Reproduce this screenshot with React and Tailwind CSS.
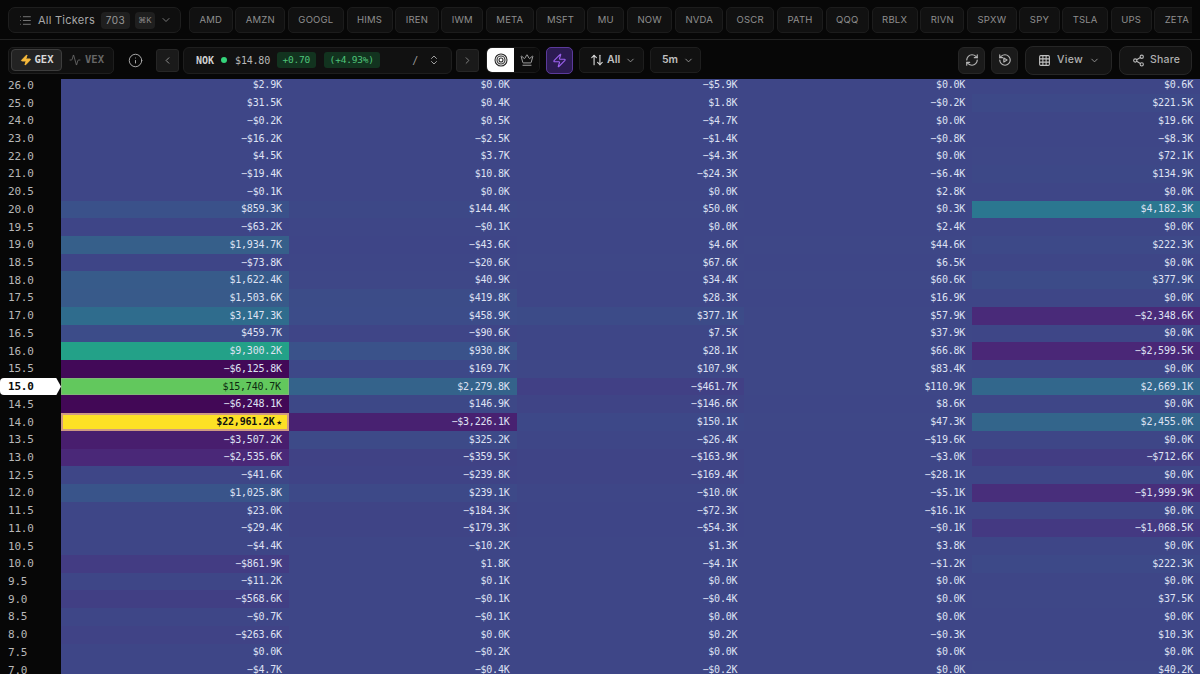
import React from "react";
import { List, ChevronDown, ChevronLeft, ChevronRight, ChevronsUpDown, Info, Activity, Crown, Zap, ArrowUpDown, RefreshCw, Grid3x3, Share2 } from "lucide-react";

const tickers = ["AMD","AMZN","GOOGL","HIMS","IREN","IWM","META","MSFT","MU","NOW","NVDA","OSCR","PATH","QQQ","RBLX","RIVN","SPXW","SPY","TSLA","UPS","ZETA"];

const rows = [
["26.0","$2.9K","$0.0K","−$5.9K","$0.0K","$0.6K"],
["25.0","$31.5K","$0.4K","$1.8K","−$0.2K","$221.5K"],
["24.0","−$0.2K","$0.5K","−$4.7K","$0.0K","$19.6K"],
["23.0","−$16.2K","−$2.5K","−$1.4K","−$0.8K","−$8.3K"],
["22.0","$4.5K","$3.7K","−$4.3K","$0.0K","$72.1K"],
["21.0","−$19.4K","$10.8K","−$24.3K","−$6.4K","$134.9K"],
["20.5","−$0.1K","$0.0K","$0.0K","$2.8K","$0.0K"],
["20.0","$859.3K","$144.4K","$50.0K","$0.3K","$4,182.3K"],
["19.5","−$63.2K","−$0.1K","$0.0K","$2.4K","$0.0K"],
["19.0","$1,934.7K","−$43.6K","$4.6K","$44.6K","$222.3K"],
["18.5","−$73.8K","−$20.6K","$67.6K","$6.5K","$0.0K"],
["18.0","$1,622.4K","$40.9K","$34.4K","$60.6K","$377.9K"],
["17.5","$1,503.6K","$419.8K","$28.3K","$16.9K","$0.0K"],
["17.0","$3,147.3K","$458.9K","$377.1K","$57.9K","−$2,348.6K"],
["16.5","$459.7K","−$90.6K","$7.5K","$37.9K","$0.0K"],
["16.0","$9,300.2K","$930.8K","$28.1K","$66.8K","−$2,599.5K"],
["15.5","−$6,125.8K","$169.7K","$107.9K","$83.4K","$0.0K"],
["15.0","$15,740.7K","$2,279.8K","−$461.7K","$110.9K","$2,669.1K"],
["14.5","−$6,248.1K","$146.9K","−$146.6K","$8.6K","$0.0K"],
["14.0","$22,961.2K","−$3,226.1K","$150.1K","$47.3K","$2,455.0K"],
["13.5","−$3,507.2K","$325.2K","−$26.4K","−$19.6K","$0.0K"],
["13.0","−$2,535.6K","−$359.5K","−$163.9K","−$3.0K","−$712.6K"],
["12.5","−$41.6K","−$239.8K","−$169.4K","−$28.1K","$0.0K"],
["12.0","$1,025.8K","$239.1K","−$10.0K","−$5.1K","−$1,999.9K"],
["11.5","$23.0K","−$184.3K","−$72.3K","−$16.1K","$0.0K"],
["11.0","−$29.4K","−$179.3K","−$54.3K","−$0.1K","−$1,068.5K"],
["10.5","−$4.4K","−$10.2K","$1.3K","$3.8K","$0.0K"],
["10.0","−$861.9K","$1.8K","−$4.1K","−$1.2K","$222.3K"],
["9.5","−$11.2K","$0.1K","$0.0K","$0.0K","$0.0K"],
["9.0","−$568.6K","−$0.1K","−$0.4K","$0.0K","$37.5K"],
["8.5","−$0.7K","−$0.1K","$0.0K","$0.0K","$0.0K"],
["8.0","−$263.6K","$0.0K","$0.2K","−$0.3K","$10.3K"],
["7.5","$0.0K","−$0.2K","$0.0K","$0.0K","$0.0K"],
["7.0","−$4.7K","−$0.4K","−$0.2K","$0.0K","$40.2K"],
];

const stops = [
  [-6300,[66,8,86]],
  [-3300,[72,32,112]],
  [-2500,[74,40,120]],
  [-1000,[68,58,130]],
  [0,[62,70,135]],
  [900,[58,82,138]],
  [1900,[54,95,138]],
  [3150,[47,108,141]],
  [4200,[43,119,144]],
  [9300,[35,161,136]],
  [15740,[98,200,93]],
  [22961,[253,225,37]],
];
function colorFor(text) {
  const v = parseFloat(text.replace(/[$,K]/g, "").replace("−", "-"));
  for (let i = 0; i < stops.length - 1; i++) {
    const [a, ca] = stops[i], [b, cb] = stops[i + 1];
    if (v <= b) {
      const t = Math.max(0, (v - a) / (b - a));
      return `rgb(${ca.map((c, k) => Math.round(c + (cb[k] - c) * t)).join(",")})`;
    }
  }
  return "rgb(253,225,37)";
}

const Ticker = ({ name }) => (
  <div className="h-[26px] shrink-0 px-[9.5px] flex items-center rounded-[5px] border border-[#1c1c1c] bg-[#111111] text-[9.5px] tracking-[0.2px] text-[#8f8f8f]">{name}</div>
);

const IconBtn = ({ children, cls }) => (
  <div className={"flex items-center justify-center border border-[#262626] bg-[#1a1a1a] " + cls}>{children}</div>
);

function Cell({ text }) {
  const isTop = text === "$22,961.2K";
  const isGreen = text === "$15,740.7K";
  return (
    <div
      style={{ backgroundColor: colorFor(text) }}
      className={
        "h-full flex items-center justify-end " +
        (isTop ? "pr-[5px] text-[#101010] font-bold border-2 border-[#cf9a83] " : "pr-[7px] ") +
        (isGreen ? "text-[#0c2a10] border border-[#7fb877] " : "") +
        (!isTop && !isGreen ? "text-[#dfe2f3] " : "")
      }
    >
      {text}
      {isTop && <span className="ml-[2px] text-[9px] leading-none">★</span>}
    </div>
  );
}

export default function App() {
  return (
    <div className="w-[1200px] h-[674px] overflow-hidden bg-[#070707] font-['Inter',sans-serif] flex flex-col">
      <div className="h-[40px] shrink-0 border-b border-[#222222] flex items-center pl-[8px] pr-[8px] pt-[1px] gap-[8px]">
        <div className="h-[26px] w-[173px] shrink-0 rounded-[7px] border border-[#1e1e1e] bg-[#0f0f0f] flex items-center pl-[10px]">
          <List size={13} className="text-[#8c8c8c]" strokeWidth={1.5} />
          <span className="ml-[6px] text-[11px] text-[#a8a8a8] tracking-[0.25px]">All Tickers</span>
          <span className="ml-[6px] h-[17px] w-[29px] rounded-[4px] bg-[#1f1f1f] text-[10px] text-[#9a9a9a] flex items-center justify-center tracking-[0.4px]">703</span>
          <span className="ml-[5px] h-[17px] w-[20px] rounded-[4px] bg-[#1f1f1f] text-[8px] text-[#8a8a8a] flex items-center justify-center">⌘K</span>
          <ChevronDown size={12} className="ml-[5px] text-[#777777]" />
        </div>
        <div className="flex-1 min-w-0 flex gap-[2.6px] overflow-hidden">
          {tickers.map((t) => <Ticker key={t} name={t} />)}
        </div>
      </div>

      <div className="h-[39px] shrink-0 flex items-center pl-[8px] pr-[8px] pt-[1px] relative z-10 bg-[#070707]">
        <div className="w-[106px] h-[27px] rounded-[5px] border border-[#1e1e1e] bg-[#101010] flex items-center pl-[2px]">
          <div className="w-[51px] h-[22px] rounded-[4px] border border-[#3d3d3d] bg-[#232323] flex items-center justify-center gap-[3px]">
            <Zap size={12} fill="#f6b93b" stroke="#f6b93b" />
            <span className="font-['DejaVu_Sans_Mono',monospace] font-bold text-[10.5px] text-[#d8d8d8]">GEX</span>
          </div>
          <div className="flex items-center ml-[7px] gap-[4px]">
            <Activity size={12} className="text-[#777777]" strokeWidth={1.5} />
            <span className="font-['DejaVu_Sans_Mono',monospace] font-bold text-[10.5px] text-[#666666]">VEX</span>
          </div>
        </div>
        <Info size={15} className="ml-[14px] text-[#b0b0b0]" strokeWidth={1.5} />
        <IconBtn cls="ml-[13px] w-[23px] h-[23px] rounded-[3px]"><ChevronLeft size={11} className="text-[#9a9a9a]" /></IconBtn>
        <div className="ml-[4px] w-[269px] h-[27px] rounded-[6px] border border-[#1e1e1e] bg-[#111111] flex items-center pl-[12px] font-['DejaVu_Sans_Mono',monospace] text-[10px] tracking-[-0.2px]">
          <span className="font-bold text-[#d0d0d0] tracking-normal">NOK</span>
          <span className="ml-[7px] w-[6px] h-[6px] rounded-full bg-[#34d37a]" />
          <span className="ml-[8px] text-[#b8b8b8]">$14.80</span>
          <span className="ml-[7px] h-[16px] px-[5.5px] rounded-[3px] bg-[#12331f] text-[#4fc47a] flex items-center text-[9.5px]">+0.70</span>
          <span className="ml-[8px] h-[16px] px-[6px] rounded-[3px] bg-[#12331f] text-[#4fc47a] flex items-center text-[9.5px]">(+4.93%)</span>
          <span className="ml-auto text-[#9a9a9a]">/</span>
          <ChevronsUpDown size={12} className="ml-[10px] mr-[11px] text-[#a0a0a0]" />
        </div>
        <IconBtn cls="ml-[4px] w-[23px] h-[23px] rounded-[3px]"><ChevronRight size={11} className="text-[#8a8a8a]" /></IconBtn>
        <div className="ml-[7px] h-[26px] w-[54px] rounded-[6px] border border-[#1a1a1a] flex overflow-hidden">
          <div className="w-[27px] bg-white flex items-center justify-center">
            <svg width="14" height="14" viewBox="0 0 14 14" fill="none" stroke="#2a2a2a" strokeWidth="1.1">
              <circle cx="7" cy="7" r="6" /><circle cx="7" cy="7" r="4" /><circle cx="7" cy="7" r="2" />
            </svg>
          </div>
          <div className="flex-1 bg-[#0c0c0c] flex items-center justify-center"><Crown size={14} className="text-[#b5b5b5]" strokeWidth={1.5} /></div>
        </div>
        <div className="ml-[6px] w-[27px] h-[27px] rounded-[5px] border border-[#5b3a9c] bg-[#2c1b52] flex items-center justify-center">
          <Zap size={15} className="text-[#9d62f0]" strokeWidth={1.8} />
        </div>
        <div className="ml-[6px] w-[65px] h-[26px] rounded-[5px] border border-[#1e1e1e] bg-[#111111] flex items-center pl-[10px]">
          <ArrowUpDown size={14} className="text-[#d0d0d0]" strokeWidth={2} />
          <span className="ml-[3px] text-[10.5px] font-semibold text-[#c0c0c0]">All</span>
          <ChevronDown size={11} className="ml-[5px] text-[#999999]" />
        </div>
        <div className="ml-[6px] w-[51px] h-[26px] rounded-[5px] border border-[#1e1e1e] bg-[#111111] flex items-center pl-[11px]">
          <span className="text-[10.5px] font-semibold text-[#c0c0c0]">5m</span>
          <ChevronDown size={11} className="ml-[5px] text-[#999999]" />
        </div>
        <IconBtn cls="ml-auto w-[27px] h-[27px] rounded-[6px]"><RefreshCw size={14} className="text-[#b5b5b5]" /></IconBtn>
        <IconBtn cls="ml-[6px] w-[27px] h-[27px] rounded-[6px]">
          <svg width="14" height="14" viewBox="0 0 24 24" fill="none" stroke="#b5b5b5" strokeWidth="2" strokeLinecap="round" strokeLinejoin="round">
            <path d="M3 12a9 9 0 1 0 9-9 9.75 9.75 0 0 0-6.74 2.74L3 8" />
            <path d="M3 3v5h5" />
            <path d="M10 8.5l5.5 3.5-5.5 3.5z" />
          </svg>
        </IconBtn>
        <div className="ml-[7px] w-[87px] h-[29px] rounded-[8px] border border-[#262626] bg-[#141414] flex items-center pl-[12px]">
          <Grid3x3 size={13} className="text-[#c0c0c0]" />
          <span className="ml-[6px] text-[10.5px] font-medium text-[#b0b0b0] tracking-[0.3px]">View</span>
          <ChevronDown size={11} className="ml-[6px] text-[#999999]" />
        </div>
        <div className="ml-[7px] w-[73px] h-[29px] rounded-[8px] border border-[#262626] bg-[#141414] flex items-center pl-[12px]">
          <Share2 size={13} className="text-[#b8b8b8]" />
          <span className="ml-[5px] text-[10.5px] font-medium text-[#b0b0b0] tracking-[0.2px]">Share</span>
        </div>
      </div>

      <div className="relative flex-1 min-h-0 overflow-hidden font-['DejaVu_Sans_Mono',monospace] text-[10px] tracking-[-0.2px] leading-none bg-[#3e4687]">
        <div className="-mt-[2.5px]">
          {rows.map((r) => (
            <div key={r[0]} className="grid grid-cols-[61px_repeat(5,minmax(0,1fr))] h-[17.73px]">
              {r[0] === "15.0" ? (
                <div className="bg-[#070707] h-full">
                  <div className="h-full bg-white rounded-l-[4px] pl-[8px] flex items-center font-bold text-[11px] tracking-[-0.2px] text-[#0a0a0a] [clip-path:polygon(0_0,92%_0,100%_50%,92%_100%,0_100%)]">{r[0]}</div>
                </div>
              ) : (
                <div className="bg-[#070707] h-full pl-[8px] flex items-center text-[11px] tracking-[-0.2px] text-[#b8b8b8]">{r[0]}</div>
              )}
              {r.slice(1).map((c, i) => <Cell key={i} text={c} />)}
            </div>
          ))}
        </div>
      </div>
    </div>
  );
}
